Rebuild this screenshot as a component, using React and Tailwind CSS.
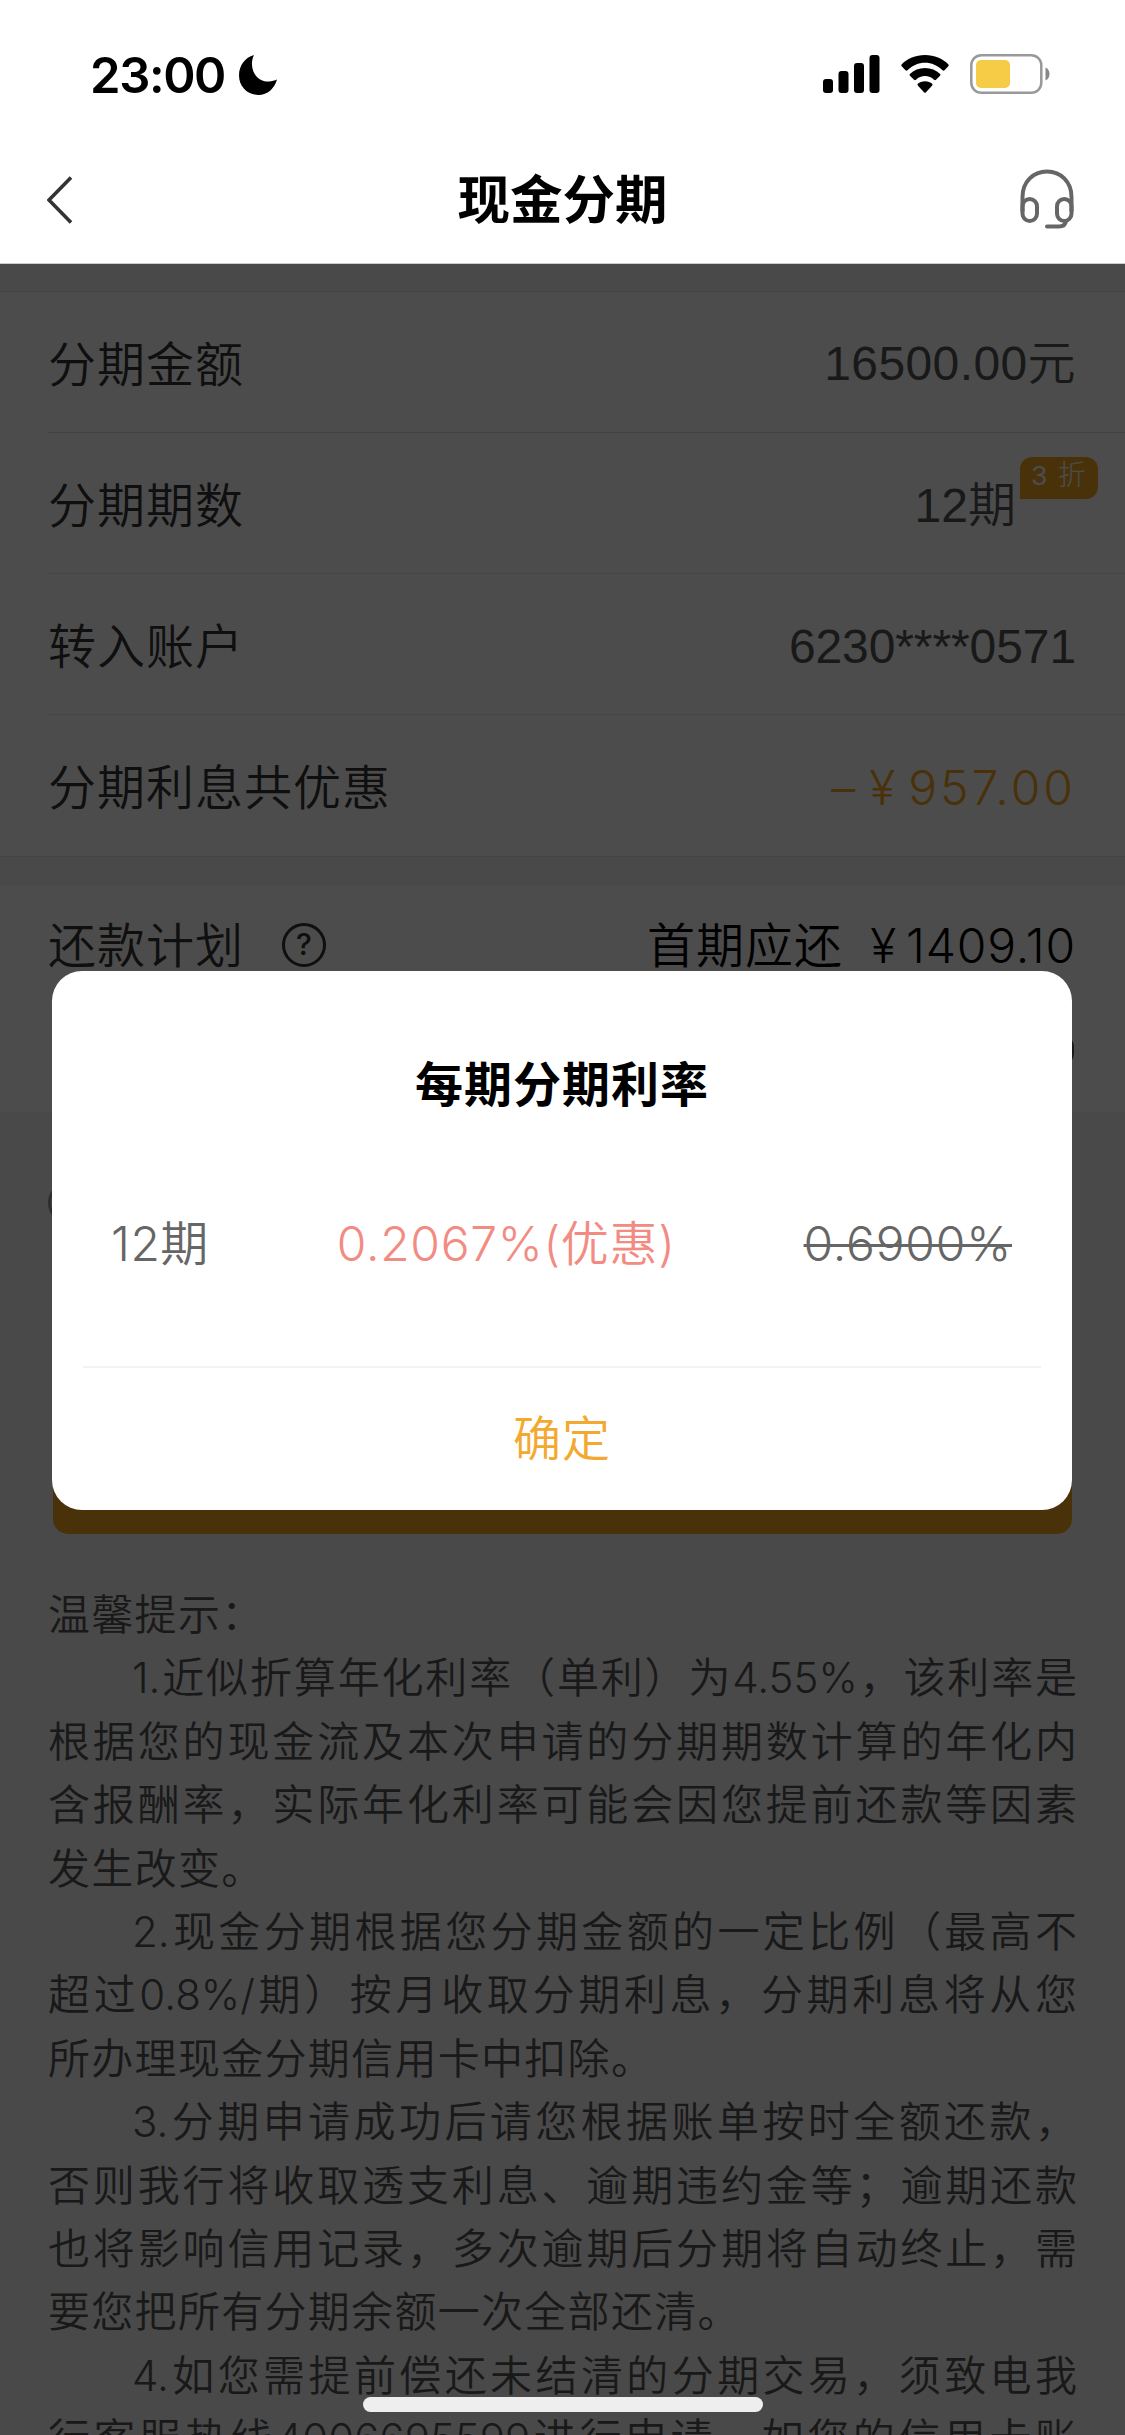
const sans = "font-['Liberation_Sans','Noto_Sans_CJK_SC',sans-serif]";
const cjk = "font-['Inter','Noto_Sans_CJK_SC',sans-serif]";

const tips = [
  { text: "温馨提示：", last: true },
  { text: "1.近似折算年化利率（单利）为4.55%，该利率是", indent: true },
  { text: "根据您的现金流及本次申请的分期期数计算的年化内" },
  { text: "含报酬率，实际年化利率可能会因您提前还款等因素" },
  { text: "发生改变。", last: true },
  { text: "2.现金分期根据您分期金额的一定比例（最高不", indent: true },
  { text: "超过0.8%/期）按月收取分期利息，分期利息将从您" },
  { text: "所办理现金分期信用卡中扣除。", last: true },
  { text: "3.分期申请成功后请您根据账单按时全额还款，", indent: true },
  { text: "否则我行将收取透支利息、逾期违约金等；逾期还款" },
  { text: "也将影响信用记录，多次逾期后分期将自动终止，需" },
  { text: "要您把所有分期余额一次全部还清。", last: true },
  { text: "4.如您需提前偿还未结清的分期交易，须致电我", indent: true },
  { text: "行客服热线4006695599进行申请，如您的信用卡账" },
];

function StatusBar() {
  return (
    <div className="flex h-[136px] items-center justify-between pt-[12px] pr-[75px] pl-[90px]">
      <div className="flex items-center gap-[14px]">
        <span className="pt-[3px] font-['Inter',sans-serif] text-[49px] leading-[60px] font-semibold tracking-[-1.4px] text-black">
          23:00
        </span>
        <svg className="mt-[2px]" width="38" height="40" viewBox="0 0 38 40">
          <path
            d="M15 0C13.500 3 12.800 6.500 13 10C13.500 20 21 27 30 26.500C33 26.300 35.500 25.500 38 24.500C35.500 33.500 28.500 40 19.500 40C8.500 40 0 31.500 0 20.500C0 10.500 6 2.500 15 0Z"
            fill="#000"
          />
        </svg>
      </div>
      <div className="flex items-center">
        <svg width="57" height="38" viewBox="0 0 57 38" fill="#000">
          <rect x="0" y="24" width="10" height="14" rx="3" />
          <rect x="15.500" y="16" width="10" height="22" rx="3" />
          <rect x="31" y="8" width="10" height="30" rx="3" />
          <rect x="46.500" y="0" width="10" height="38" rx="3" />
        </svg>
        <svg className="ml-[21px]" width="48" height="38" viewBox="0 0 48 38" fill="#000">
          <path d="M24 0C33.500 0 41.500 3.500 47.500 9.500Q48 10.500 47.300 11.300L43.500 15.300Q42.500 16 41.500 15.200C36.500 10.300 30.500 7.700 24 7.700S11.500 10.300 6.500 15.200Q5.500 16 4.500 15.300L.7 11.300Q0 10.500 .5 9.500C6.500 3.500 14.500 0 24 0Z" />
          <path d="M24 13C30 13 35.200 15.200 39.200 19Q39.800 20 39 20.800L35 24.800Q34 25.500 33 24.700C30.500 22.300 27.500 21 24 21S17.500 22.300 15 24.700Q14 25.500 13 24.800L9 20.800Q8.200 20 8.800 19C12.800 15.200 18 13 24 13Z" />
          <path d="M24 26.300C27 26.300 29.400 27.300 31.200 28.700Q31.900 29.700 31 30.700L25 37.200Q24 38.200 23 37.200L17 30.700Q16.100 29.700 16.800 28.700C18.600 27.300 21 26.300 24 26.300Z" />
        </svg>
        <svg className="ml-[21px]" width="80" height="40" viewBox="0 0 80 40">
          <rect x="1.300" y="1.300" width="70" height="37.400" rx="10" fill="none" stroke="#999" strokeWidth="2.500" />
          <rect x="6" y="6" width="34" height="28" rx="5" fill="#f6cb46" />
          <path d="M75.500 13.500C78 14.500 79.500 17 79.500 20S78 25.500 75.500 26.500Z" fill="#888" />
        </svg>
      </div>
    </div>
  );
}

function NavBar() {
  return (
    <div className="flex h-[128px] items-center justify-between border-b border-[#ccc] pr-[51px] pl-[47px]">
      <svg width="58" height="48" viewBox="0 0 58 48">
        <path d="M24 1.500L2 24L24 46.500" fill="none" stroke="#333" strokeWidth="3.600" />
      </svg>
      <h1 className="pb-[7px] font-['Noto_Sans_CJK_SC',sans-serif] text-[52.500px] leading-[60px] font-bold text-black">
        现金分期
      </h1>
      <svg className="mb-[2px]" width="54" height="60" viewBox="0 0 54 60" fill="none" stroke="#666" strokeWidth="4" strokeLinecap="round">
        <path d="M2.500 42V28C2.500 13 13 2.500 27 2.500S51.500 13 51.500 28V42" />
        <rect x="2.500" y="30" width="14.500" height="22" rx="7.200" />
        <rect x="37" y="30" width="14.500" height="22" rx="7.200" />
        <path d="M46 52C45.500 56 43 57.500 39 57.500H27" />
      </svg>
    </div>
  );
}

function Row({ label, children }) {
  return (
    <div className="ml-[48px] flex h-[141px] items-center justify-between border-b border-[#e8e8e8] pt-[5px] pr-[49px] first:border-[#d9d9d9] last:border-0">
      <span className="text-[48px] font-[350] tracking-[1px] text-[#333]">{label}</span>
      {children}
    </div>
  );
}

function Dialog() {
  return (
    <div className="absolute top-[971px] left-[52px] h-[539px] w-[1020px] rounded-[30px] bg-white px-[31px]">
      <h2 className="pt-[78px] text-center text-[48px] leading-[72px] font-bold tracking-[1px] text-black">
        每期分期利率
      </h2>
      <div className="mt-[87px] flex h-[72px] items-center justify-between pr-[29px] pl-[28px] text-[48px] font-[350] text-[#666]">
        <span className="tracking-[0.5px]">12期</span>
        <span className="tracking-[0.7px] text-[#f28b82]">0.2067%(优惠)</span>
        <span className="tracking-[0.8px] line-through decoration-[3px]">0.6900%</span>
      </div>
      <div className="mt-[86px] h-[2px] bg-[#f3f3f3]" />
      <button className="h-[142px] w-full text-[48px] font-[350] tracking-[1px] text-[#f3a92f]">确定</button>
    </div>
  );
}

function App() {
  return (
    <div className={`relative h-[2435px] w-[1125px] overflow-hidden bg-white ${cjk}`}>
      <StatusBar />
      <NavBar />
      <div className="relative h-[2171px] overflow-hidden bg-[#f4f4f4]">
        <div className="h-[28px] border-b border-[#e3e3e3]" />
        <div className="border-b border-[#e3e3e3] bg-white">
          <Row label="分期金额">
            <span className={`pb-[2px] text-[48px] font-[350] tracking-[0.4px] text-[#555] ${sans}`}>16500.00元</span>
          </Row>
          <Row label="分期期数">
            <span className={`relative mr-[60px] text-[48px] font-[350] text-[#555] ${sans}`}>
              12期
              <span className="absolute top-[-13px] left-[105px] flex h-[42px] w-[78px] items-center justify-center rounded-[12px] rounded-bl-none bg-[#f5a623] pb-[3px] text-[28px] font-light [word-spacing:3px] text-white">
                3 折
              </span>
            </span>
          </Row>
          <Row label="转入账户">
            <span className={`text-[48px] tracking-[-0.1px] text-[#555] ${sans}`}>6230****0571</span>
          </Row>
          <Row label="分期利息共优惠">
            <span className="flex text-[48px] font-[350] text-[#f5a623]">
              <span>–</span>
              <span className="ml-[14px]">¥</span>
              <span className="ml-[13px] tracking-[3px]">957.00</span>
            </span>
          </Row>
        </div>
        <div className="h-[29px]" />
        <div className="relative flex h-[226px] items-start justify-between bg-white pt-[24px] pr-[49px] pl-[48px]">
          <div className="flex items-center">
            <span className="text-[48px] font-[350] tracking-[1px] text-[#333]">还款计划</span>
            <span className="mb-[3px] ml-[38px] flex size-[44px] items-center justify-center rounded-full border-[3px] border-[#333] text-[30px] font-medium text-[#333]">
              ?
            </span>
          </div>
          <div className="flex text-[48px] font-[350] text-black">
            <span className="tracking-[1px]">首期应还</span>
            <span className="ml-[27px]">¥</span>
            <span className="ml-[10px] tracking-[0.8px]">1409.10</span>
          </div>
          <span className="absolute top-[149px] right-[51px] h-[30px] w-[24px] rounded-full border-[4px] border-[#555]" />
        </div>
        {/* agreement checkbox */}
        <div className="mt-[69px] ml-[48px] size-[44px] rounded-full border-[3px] border-[#999]" />
        <div className="mt-[197px] ml-[53px] h-[112px] w-[1019px] rounded-[15px] bg-[#f5a623]" />
        <div className="mt-[49px] mr-[48px] ml-[48px] text-[42px] leading-[63.400px] font-[350] text-[#555]">
          {tips.map((line) => (
            <p
              key={line.text}
              className={`whitespace-nowrap ${line.last ? "tracking-[1.3px]" : "[text-align-last:justify] [text-justify:inter-character]"} ${line.indent ? "pl-[84px]" : ""}`}
            >
              {line.text}
            </p>
          ))}
        </div>
        <div className="absolute inset-0 bg-black/70" />
      </div>
      <Dialog />
      <div className="absolute bottom-[23px] left-[363px] h-[15px] w-[400px] rounded-full bg-[#eee]" />
    </div>
  );
}

export default App;
